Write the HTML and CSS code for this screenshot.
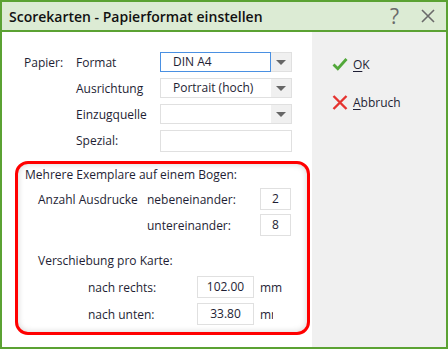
FILE: index.html
```html
<!DOCTYPE html>
<html lang="de">
<head>
    <meta charset="UTF-8">
    <title>Scorekarten - Papierformat einstellen</title>
    <link rel="stylesheet" href="styles.css">
</head>
<body>
    <div class="window">
        <div class="titlebar">
            <span class="title">Scorekarten - Papierformat einstellen</span>
            <span class="help">?</span>
            <svg class="close" width="14" height="14" viewBox="0 0 14 14">
                <path d="M1 1 L13 13 M13 1 L1 13" stroke="#6a6a6a" stroke-width="1.6" fill="none"/>
            </svg>
        </div>
        <div class="content">
            <main class="main">
                <div class="form">
                    <div class="row">
                        <span class="col1">Papier:</span>
                        <span class="col2">Format</span>
                        <div class="combo focus">
                            <span class="combo-text">DIN A4</span>
                            <span class="combo-btn"><i class="tri"></i></span>
                        </div>
                    </div>
                    <div class="row">
                        <span class="col1"></span>
                        <span class="col2">Ausrichtung</span>
                        <div class="combo">
                            <span class="combo-text">Portrait (hoch)</span>
                            <span class="combo-btn"><i class="tri"></i></span>
                        </div>
                    </div>
                    <div class="row">
                        <span class="col1"></span>
                        <span class="col2">Einzugquelle</span>
                        <div class="combo">
                            <span class="combo-text"></span>
                            <span class="combo-btn"><i class="tri"></i></span>
                        </div>
                    </div>
                    <div class="row">
                        <span class="col1"></span>
                        <span class="col2">Spezial:</span>
                        <div class="field wide"></div>
                    </div>
                </div>

                <section class="highlight">
                    <div class="heading">Mehrere Exemplare auf einem Bogen:</div>
                    <div class="line count">
                        <span class="lbl-a">Anzahl Ausdrucke</span>
                        <span class="lbl-b">nebeneinander:</span>
                        <div class="field small">2</div>
                    </div>
                    <div class="line count">
                        <span class="lbl-a"></span>
                        <span class="lbl-b">untereinander:</span>
                        <div class="field small">8</div>
                    </div>
                    <div class="subheading">Verschiebung pro Karte:</div>
                    <div class="line offset">
                        <span class="lbl-c">nach rechts:</span>
                        <div class="field mid">102.00</div>
                        <span class="unit">mm</span>
                    </div>
                    <div class="line offset">
                        <span class="lbl-c">nach unten:</span>
                        <div class="field mid">33.80</div>
                        <span class="unit clipped">mm</span>
                    </div>
                </section>
            </main>
            <aside class="side">
                <div class="action">
                    <svg width="16" height="14" viewBox="0 0 16 14">
                        <path d="M1.5 7.5 L5.8 11.8 L14.5 2" stroke="#52a83a" stroke-width="2.8" fill="none"/>
                    </svg>
                    <span><u>O</u>K</span>
                </div>
                <div class="action">
                    <svg width="16" height="15" viewBox="0 0 16 15">
                        <path d="M1.5 1 L14.5 14 M14.5 1 L1.5 14" stroke="#e5332f" stroke-width="2.4" fill="none"/>
                    </svg>
                    <span><u>A</u>bbruch</span>
                </div>
            </aside>
        </div>
    </div>
</body>
</html>
```

FILE: styles.css
```css
body {
    margin: 0;
    padding: 0;
    font-family: "Open Sans", "Noto Sans", sans-serif;
    font-size: 12px;
    color: #1e1e34;
}

.window {
    width: 444px;
    height: 345px;
    border: 2px solid #5ba233;
    display: flex;
    flex-direction: column;
    background-color: #fff;
}

.titlebar {
    height: 28px;
    border-bottom: 2px solid #5ba233;
    background-color: #dcebd4;
    display: flex;
    align-items: center;
    padding-left: 7px;
}

.title {
    font-size: 14px;
    font-weight: 600;
    color: #111;
    flex: 1;
}

.help {
    font-size: 21px;
    color: #6a6a6a;
    margin-right: 22px;
    margin-top: -1px;
}

.close {
    margin-right: 11px;
}

.content {
    flex: 1;
    display: flex;
}

.main {
    width: 310px;
}

.side {
    flex: 1;
    background-color: #f0f0f0;
    padding-top: 22px;
    padding-left: 20px;
    display: flex;
    flex-direction: column;
    gap: 18px;
}

.action {
    display: flex;
    align-items: center;
    gap: 5px;
    height: 20px;
    font-size: 12px;
}

.action u {
    text-underline-offset: 2px;
}

/* Papier */
.form {
    padding: 20px 0 0 22px;
    display: flex;
    flex-direction: column;
    gap: 6px;
}

.row {
    display: flex;
    align-items: center;
    height: 20px;
}

.col1 {
    width: 52px;
}

.col2 {
    width: 84px;
}

.combo {
    display: flex;
    height: 20px;
}

.combo-text {
    width: 111px;
    border: 1px solid #e0e0e0;
    border-right: none;
    padding-left: 12px;
    line-height: 18px;
    box-sizing: border-box;
}

.combo.focus .combo-text {
    border: 1px solid #4a90e2;
}

.combo-btn {
    width: 21px;
    background-color: #f0f0f0;
    border: 1px solid #e0e0e0;
    border-left: none;
    box-sizing: border-box;
    display: flex;
    align-items: center;
    justify-content: center;
}

.tri {
    width: 0;
    height: 0;
    border-left: 5px solid transparent;
    border-right: 5px solid transparent;
    border-top: 5px solid #666;
}

.field {
    border: 1px solid #e0e0e0;
    box-sizing: border-box;
    background-color: #fff;
    text-align: center;
    line-height: 20px;
}

.field.wide {
    width: 132px;
    height: 22px;
    margin-top: 2px;
}

/* highlighted group */
.highlight {
    margin: 11px 0 0 13px;
    width: 295px;
    height: 174px;
    box-sizing: border-box;
    border: 3px solid #ff0000;
    border-radius: 13px;
    box-shadow: inset 0 0 6px rgba(0, 0, 0, 0.18);
    padding: 2px 0 0 7px;
}

.heading,
.subheading {
    line-height: 18px;
}

.subheading {
    margin: 16px 0 0 13px;
}

.line {
    display: flex;
    align-items: center;
    height: 22px;
}

.count {
    margin-top: 4px;
    padding-left: 13px;
}

.lbl-a {
    width: 109px;
}

.lbl-b {
    width: 113px;
}

.field.small {
    width: 31px;
    height: 22px;
}

.offset {
    margin-top: 5px;
    padding-left: 63px;
}

.subheading + .offset {
    margin-top: 6px;
}

.lbl-c {
    width: 109px;
}

.field.mid {
    width: 57px;
    height: 22px;
}

.unit {
    margin-left: 6px;
}

.unit.clipped {
    width: 13px;
    overflow: hidden;
    white-space: nowrap;
}
```
